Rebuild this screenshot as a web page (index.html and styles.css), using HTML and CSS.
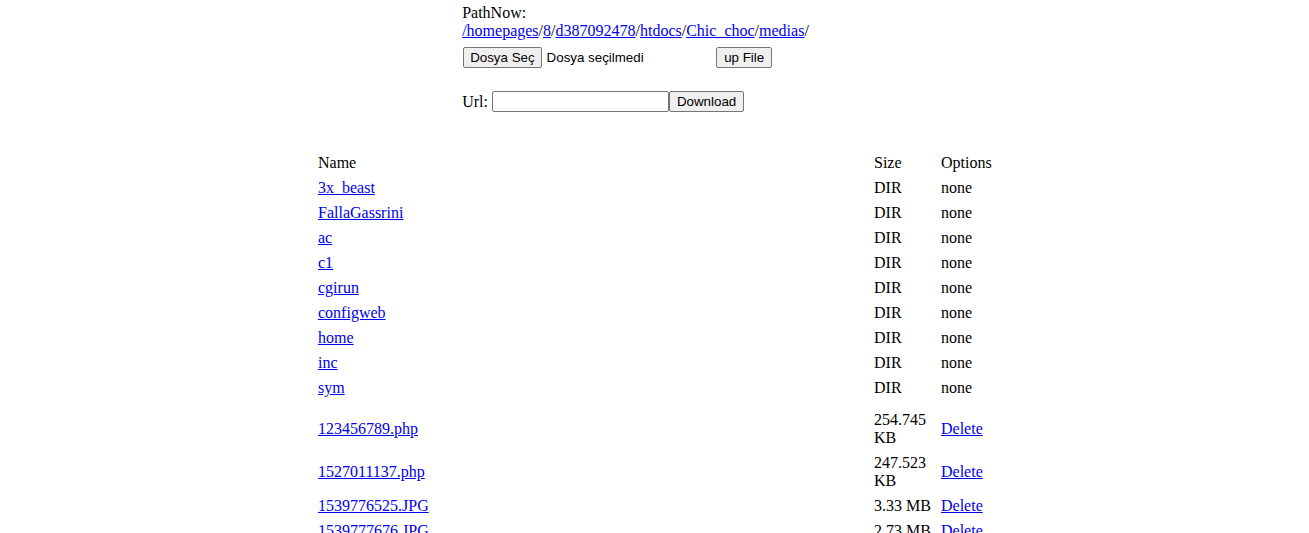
FILE: index.html
```html
<!DOCTYPE html>
<html lang="tr">

<head>
    <meta charset="UTF-8">
    <title>File Manager</title>
    <link rel="stylesheet" href="styles.css">
</head>

<body>

    <div class="top">
        <div class="path">
            PathNow:<br>
            <a href="#">/homepages</a>/<a href="#">8</a>/<a href="#">d387092478</a>/<a href="#">htdocs</a>/<a href="#">Chic_choc</a>/<a href="#">medias</a>/
        </div>

        <form class="upload">
            <label class="file-pick">
                <span class="btn pick-btn">Dosya Seç</span>
                <span class="file-name">Dosya seçilmedi</span>
            </label>
            <button type="button" class="btn">up File</button>
        </form>

        <form class="fetch">
            <span>Url:</span>
            <input type="text" class="url-box"><button type="button" class="btn">Download</button>
        </form>
    </div>

    <table class="files">
        <colgroup>
            <col class="col-name">
            <col class="col-size">
            <col class="col-opt">
        </colgroup>
        <tr>
            <td>Name</td>
            <td>Size</td>
            <td>Options</td>
        </tr>
        <tr><td><a href="#">3x_beast</a></td><td>DIR</td><td>none</td></tr>
        <tr><td><a href="#">FallaGassrini</a></td><td>DIR</td><td>none</td></tr>
        <tr><td><a href="#">ac</a></td><td>DIR</td><td>none</td></tr>
        <tr><td><a href="#">c1</a></td><td>DIR</td><td>none</td></tr>
        <tr><td><a href="#">cgirun</a></td><td>DIR</td><td>none</td></tr>
        <tr><td><a href="#">configweb</a></td><td>DIR</td><td>none</td></tr>
        <tr><td><a href="#">home</a></td><td>DIR</td><td>none</td></tr>
        <tr><td><a href="#">inc</a></td><td>DIR</td><td>none</td></tr>
        <tr><td><a href="#">sym</a></td><td>DIR</td><td>none</td></tr>
        <tr class="gap"><td colspan="3"></td></tr>
        <tr><td><a href="#">123456789.php</a></td><td>254.745 KB</td><td><a href="#">Delete</a></td></tr>
        <tr><td><a href="#">1527011137.php</a></td><td>247.523 KB</td><td><a href="#">Delete</a></td></tr>
        <tr><td><a href="#">1539776525.JPG</a></td><td>3.33 MB</td><td><a href="#">Delete</a></td></tr>
        <tr><td><a href="#">1539777676.JPG</a></td><td>2.73 MB</td><td><a href="#">Delete</a></td></tr>
        <tr><td><a href="#">1539778012.JPG</a></td><td>2.91 MB</td><td><a href="#">Delete</a></td></tr>
        <tr><td><a href="#">index.php</a></td><td>1.204 KB</td><td><a href="#">Delete</a></td></tr>
    </table>

</body>

</html>
```

FILE: styles.css
```css
* {
    box-sizing: border-box;
}

body {
    margin: 0;
    background-color: #fff;
    color: #000;
    font-family: 'Liberation Serif', 'Times New Roman', serif;
    font-size: 16px;
}

a {
    color: #0000ee;
    text-decoration: underline;
}

/* path + upload block */
.top {
    width: 30%;
    margin: 0 auto;
    padding: 4px;
}

.path {
    line-height: 18px;
}

.upload,
.fetch {
    display: flex;
    align-items: center;
    height: 21px;
}

.upload {
    margin-top: 7px;
}

.fetch {
    margin-top: 23px;
}

.file-pick {
    display: flex;
    align-items: center;
    width: 254px;
    padding-left: 1px;
}

.file-name {
    margin-left: 5px;
    font-family: 'Liberation Sans', Arial, sans-serif;
    font-size: 13.333px;
}

.btn {
    display: inline-flex;
    align-items: center;
    height: 21px;
    padding: 1px 7px;
    background-color: #efefef;
    border: 1px solid #767676;
    border-radius: 2px;
    color: #000;
    font-family: 'Liberation Sans', Arial, sans-serif;
    font-size: 13.333px;
    cursor: default;
}

.pick-btn {
    padding: 1px 6px;
}

.url-box {
    width: 177px;
    height: 21px;
    margin: 0 0 0 4px;
    padding: 1px 2px;
    border: 1px solid #767676;
    border-radius: 2px;
    font-family: 'Liberation Sans', Arial, sans-serif;
    font-size: 13.333px;
}

/* directory listing */
.files {
    width: 681px;
    margin: 34px auto 0;
    border-collapse: separate;
    border-spacing: 1px;
    table-layout: fixed;
}

.col-name {
    width: 555px;
}

.col-size {
    width: 66px;
}

.col-opt {
    width: 56px;
}

.files td {
    padding: 3px;
    line-height: 18px;
    vertical-align: middle;
}

.files .gap td {
    padding: 3px;
    height: 6px;
    line-height: 0;
}
```
